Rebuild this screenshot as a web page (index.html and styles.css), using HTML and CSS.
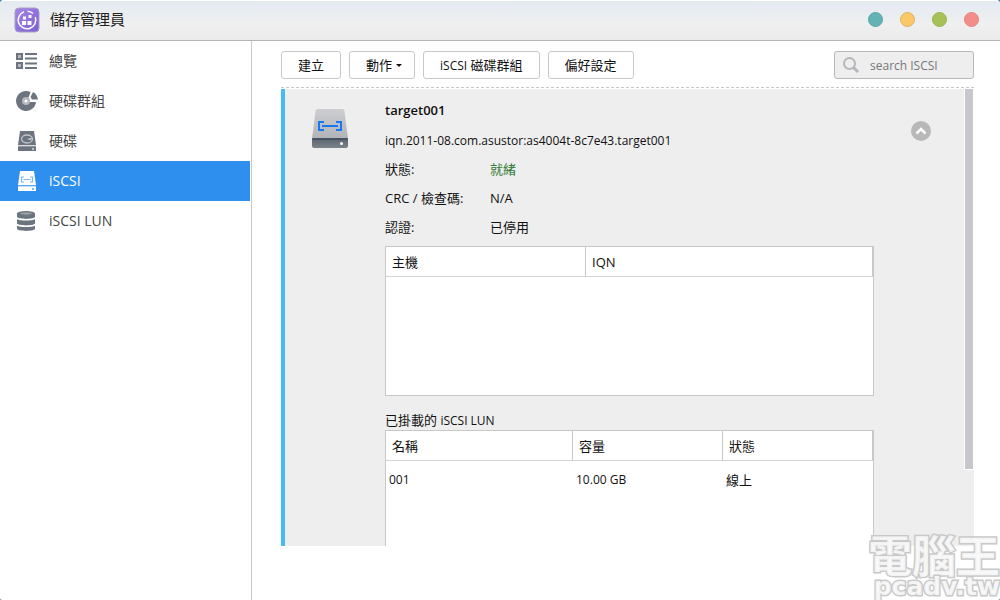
FILE: index.html
```html
<!DOCTYPE html>
<html lang="zh-Hant">
<head>
<meta charset="utf-8">
<meta name="viewport" content="width=device-width, initial-scale=1">
<title>儲存管理員</title>
<link rel="stylesheet" href="styles.css">
</head>
<body>
<div class="window">
  <header class="titlebar">
    <svg class="app-icon" viewBox="0 0 26 26" aria-hidden="true">
      <defs><linearGradient id="app" x1="0" y1="0" x2="1" y2="1"><stop offset="0" stop-color="#a586ea"/><stop offset="1" stop-color="#7f5fd0"/></linearGradient></defs>
      <rect x="1" y="1" width="24" height="24" rx="4" fill="url(#app)" stroke="#a99fc4"/>
      <path d="M10 4.700A8.800 8.800 0 1 0 21.300 10M13.500 4.200A8.800 8.800 0 0 1 19 6.500" fill="none" stroke="#fff" stroke-width="1.500"/>
      <path d="M8 14h4v4H8zM13.500 14h4v4h-4zM9 9.500h3v3H9zM14.500 8h3v3h-3z" fill="#fff"/>
    </svg>
    <h1 class="app-title">儲存管理員</h1>
    <div class="window-controls">
      <button class="dot dot-teal" type="button" aria-label="說明"></button>
      <button class="dot dot-yellow" type="button" aria-label="最小化"></button>
      <button class="dot dot-green" type="button" aria-label="最大化"></button>
      <button class="dot dot-red" type="button" aria-label="關閉"></button>
    </div>
  </header>
  <div class="body">
    <nav class="sidebar">
      <a class="nav-item" href="#overview">
        <svg class="nav-icon" viewBox="0 0 22 22" aria-hidden="true"><path d="M1 4h5v5H1zM1 13h5v5H1z" fill="#b5b9be" stroke="#6b747f" stroke-width="2"/><path d="M9 4h12M9 8.500h12M9 13.500h12M9 18h12" stroke="#6b747f" stroke-width="2"/></svg>
        <span>總覽</span>
      </a>
      <a class="nav-item" href="#groups">
        <svg class="nav-icon" viewBox="0 0 22 22" aria-hidden="true"><path d="M14.500 2A10 10 0 1 0 20 12H11z" fill="#6b747f"/><path d="M17 2Q21 4 22 9.500h-6l-1.500-2.500z" fill="#6b747f"/><circle cx="10" cy="11" r="4" fill="#b5b9be"/><circle cx="10" cy="11" r="1.500" fill="#fff"/></svg>
        <span>硬碟群組</span>
      </a>
      <a class="nav-item" href="#disks">
        <svg class="nav-icon" viewBox="0 0 22 22" aria-hidden="true"><path d="M4 1h14l2 14H2zM2 16h18v5H2z" fill="#6b747f"/><path d="M2 16h18" stroke="#b5b9be"/><ellipse cx="11" cy="9" rx="5.500" ry="4" fill="none" stroke="#c1c5c9" stroke-width="1.300"/><path d="M11 9l5-1.500-1 3z" fill="#c1c5c9"/><path d="M16 18h2v2h-2z" fill="#c1c5c9"/></svg>
        <span>硬碟</span>
      </a>
      <a class="nav-item nav-item-active" href="#iscsi" aria-current="page">
        <svg class="nav-icon" viewBox="0 0 22 22" aria-hidden="true"><path d="M4 1h14l2 14H2zM2 16h18v5H2z" fill="#fff"/><path d="M2 16h18" stroke="#8cc0f5"/><path d="M8 7H5.500v5H8M14 7h2.500v5H14M7.500 9.500h7" fill="none" stroke="#7db7f3" stroke-width="1.200"/><path d="M16 18h2v2h-2z" fill="#7db7f3"/></svg>
        <span>iSCSI</span>
      </a>
      <a class="nav-item" href="#lun">
        <svg class="nav-icon" viewBox="0 0 22 22" aria-hidden="true"><path d="M1 3.500v3.500c2 2.500 16 2.500 18 0V3.500zM1 9v4.500c2 2.500 16 2.500 18 0V9c-2 2-16 2-18 0zM1 15.500V19c2 2.500 16 2.500 18 0v-3.500c-2 2-16 2-18 0z" fill="#6b747f"/><ellipse cx="10" cy="3.500" rx="9" ry="2.500" fill="#6b747f"/><ellipse cx="10" cy="3.500" rx="6" ry="1.200" fill="#9aa1a8"/></svg>
        <span>iSCSI LUN</span>
      </a>
    </nav>
    <main class="content">
      <div class="toolbar">
        <button class="btn" type="button">建立</button>
        <button class="btn btn-menu" type="button">動作<span class="caret"></span></button>
        <button class="btn" type="button"><span class="latin">iSCSI</span> 磁碟群組</button>
        <button class="btn" type="button">偏好設定</button>
        <label class="search">
          <svg class="search-icon" viewBox="0 0 18 18" aria-hidden="true"><circle cx="7.500" cy="7.500" r="5.500" fill="none" stroke="#b4b6bb" stroke-width="2"/><path d="M11.500 11.500l4.500 4.500" stroke="#b4b6bb" stroke-width="3"/></svg>
          <input class="search-input" type="text" placeholder="search ISCSI" aria-label="search ISCSI">
        </label>
      </div>
      <div class="list">
        <article class="target">
          <svg class="target-icon" viewBox="0 0 36 41" aria-hidden="true">
            <defs><linearGradient id="disk" x1="0" y1="0" x2="0" y2="1"><stop offset="0" stop-color="#cdced1"/><stop offset="1" stop-color="#b1b3b6"/></linearGradient><linearGradient id="base" x1="0" y1="0" x2="0" y2="1"><stop offset="0" stop-color="#59626b"/><stop offset="1" stop-color="#7b848c"/></linearGradient></defs>
            <path d="M5.500 1h25Q32 1 32.300 2.500L36 30.500H0L3.700 2.500Q4 1 5.500 1z" fill="url(#disk)"/>
            <path d="M0 30h36v8q0 2-2 2H2q-2 0-2-2z" fill="url(#base)"/><path d="M1 31h34" stroke="#465363" stroke-width="2"/>
            <path d="M12 14H7v8h5M24 14h5v8h-5M10 18h16" fill="none" stroke="#1877f2" stroke-width="2"/>
            <circle cx="29.500" cy="35.500" r="1.500" fill="#fff"/>
          </svg>
          <div class="details">
            <h2 class="target-name">target001</h2>
            <p class="target-iqn">iqn.2011-08.com.asustor:as4004t-8c7e43.target001</p>
            <dl class="facts">
              <dt>狀態:</dt><dd class="ready">就緒</dd>
              <dt>CRC / 檢查碼:</dt><dd>N/A</dd>
              <dt>認證:</dt><dd>已停用</dd>
            </dl>
            <div class="grid-box">
              <table class="grid">
                <colgroup><col class="col-host"><col></colgroup>
                <thead><tr><th scope="col">主機</th><th scope="col">IQN</th></tr></thead>
              </table>
            </div>
            <h3 class="grid-title">已掛載的 <span class="latin">iSCSI LUN</span></h3>
            <div class="grid-box">
              <table class="grid">
                <colgroup><col class="col-name"><col class="col-size"><col></colgroup>
                <thead><tr><th scope="col">名稱</th><th scope="col">容量</th><th scope="col">狀態</th></tr></thead>
                <tbody><tr><td class="latin">001</td><td class="latin">10.00 GB</td><td>線上</td></tr></tbody>
              </table>
            </div>
          </div>
          <button class="collapse" type="button" aria-label="收合">
            <svg viewBox="0 0 20 20" aria-hidden="true"><path d="M5.500 12.500L10 8l4.500 4.500" fill="none" stroke="#fff" stroke-width="2.500"/></svg>
          </button>
        </article>
        <div class="scroll-thumb"></div>
      </div>
    </main>
  </div>
  <div class="watermark"><span class="mark-name">電腦王</span><span class="mark-site">pcadv.tw</span></div>
</div>
</body>
</html>
```
FILE: styles.css
```css
* { box-sizing: border-box; }

body {
  margin: 0;
  background: #3f7ea8;
  color: #111;
  font: 13px/20px "Open Sans", "Noto Sans CJK TC", sans-serif;
}

h1, h2, h3, p, dl, dd { margin: 0; font-weight: 400; }

button { font: inherit; color: inherit; padding: 0; cursor: pointer; }

.window {
  position: relative;
  display: flex;
  flex-direction: column;
  height: 100vh;
  overflow: hidden;
  border-radius: 4px 4px 2px 2px;
  background: #fff;
}

.titlebar {
  display: flex;
  flex: none;
  align-items: center;
  gap: 10px;
  height: 41px;
  padding: 0 21px 2px 14px;
  border-top: 1px solid #fff;
  border-bottom: 1px solid #b4b4b4;
  background: linear-gradient(#e3ebf2, #efefef 60%, #ebebeb);
}

.app-icon { width: 26px; height: 26px; }
.app-title { padding-bottom: 2px; font-size: 15px; color: #222; }
.window-controls { display: flex; gap: 17px; margin-left: auto; }
.dot { width: 15px; height: 15px; border: 1px solid; border-radius: 50%; }
.dot-teal { background: #62b2b6; border-color: #58a6aa; }
.dot-yellow { background: #fac869; border-color: #dcb35f; }
.dot-green { background: #a7c159; border-color: #9ab44d; }
.dot-red { background: #f48c89; border-color: #e58380; }

.body { display: flex; flex: 1; min-height: 0; }

.sidebar {
  flex: none;
  width: 252px;
  padding-right: 1px;
  border-right: 1px solid #c8c8cc;
}

.nav-item {
  display: flex;
  align-items: center;
  gap: 11px;
  height: 40px;
  padding-left: 16px;
  color: #444;
  font-size: 14px;
  text-decoration: none;
}

.nav-item-active { background: #2e8fee; color: #fff; }
.nav-icon { width: 22px; height: 22px; }

.content {
  display: flex;
  flex: 1;
  flex-direction: column;
  min-width: 0;
  padding: 10px 26px 54px 29px;
}

.toolbar {
  display: flex;
  flex: none;
  gap: 8px;
  padding-bottom: 8px;
  border-bottom: 1px dashed #c8c8c8;
}

.btn {
  height: 28px;
  padding: 0 16px;
  border: 1px solid #c8c8c8;
  border-radius: 3px;
  background: #fff;
}

.btn-menu {
  display: flex;
  align-items: center;
  gap: 4px;
  padding-right: 12px;
}

.caret {
  border: 3px solid transparent;
  border-top-color: #111;
  border-bottom: 0;
}

.search {
  display: flex;
  align-items: center;
  gap: 10px;
  width: 140px;
  height: 28px;
  margin-left: auto;
  padding: 0 7px;
  border: 1px solid #b8b8bc;
  border-radius: 3px;
  background: #eee;
}

.search-icon { flex: none; width: 18px; height: 18px; }

.search-input {
  flex: 1;
  min-width: 0;
  padding: 2px 0 0;
  border: 0;
  outline: 0;
  background: none;
  font: inherit;
  font-size: 12px;
}

.search-input::placeholder { color: #777; }

.list {
  position: relative;
  flex: 1;
  min-height: 0;
  margin-top: 1px;
  overflow: hidden;
}

.target {
  display: flex;
  gap: 37px;
  align-items: flex-start;
  padding: 11px 43px 0 27px;
  border-left: 4px solid #47bbf8;
  background: #eee;
}

.target-icon { flex: none; width: 36px; height: 41px; margin-top: 8px; }
.details { flex: 1; min-width: 0; }
.target-name { font-size: 13px; font-weight: 600; }
.target-iqn { margin: 11px 0 4px; font-size: 12px; }
.latin { font-size: 12px; }

.facts {
  display: grid;
  grid-template-columns: 105px 1fr;
  grid-auto-rows: 29px;
  line-height: 29px;
}

.ready { color: #357a38; }

.grid-box {
  height: 150px;
  margin-top: 4px;
  border: 1px solid #c8c8c8;
  background: #fff;
}

.grid {
  width: 100%;
  table-layout: fixed;
  border-spacing: 0;
  text-align: left;
}

.col-host { width: 200px; }
.col-name { width: 187px; }
.col-size { width: 150px; }

.grid th {
  height: 30px;
  padding: 0 6px;
  border-right: 1px solid #c8c8c8;
  border-bottom: 1px solid #d4d4d4;
  font-weight: 400;
}

.grid td { height: 38px; padding: 0 3px; }
.grid-title { margin-top: 15px; font-size: 13px; line-height: 19px; }
.grid-title + .grid-box { margin-top: 0; }

.collapse {
  flex: none;
  width: 20px;
  height: 20px;
  margin-top: 21px;
  border: 0;
  border-radius: 50%;
  background: #b8b8b8;
}

.collapse svg { display: block; }

.scroll-thumb {
  position: absolute;
  top: 0;
  right: 0;
  width: 10px;
  height: 381px;
  border: 1px solid #fff;
  border-top: 0;
  background: #c8c8cc;
}

.watermark {
  position: absolute;
  right: 0;
  bottom: 0;
  display: flex;
  flex-direction: column;
  align-items: flex-end;
  color: rgba(250, 250, 250, 0.9);
  font-weight: 700;
  paint-order: stroke fill;
  -webkit-text-stroke: 3px #c9c9c9;
  pointer-events: none;
}

.mark-name { font-size: 44px; line-height: 36px; }
.mark-site { font-family: "DejaVu Sans", sans-serif; font-size: 25px; line-height: 26px; }
```
